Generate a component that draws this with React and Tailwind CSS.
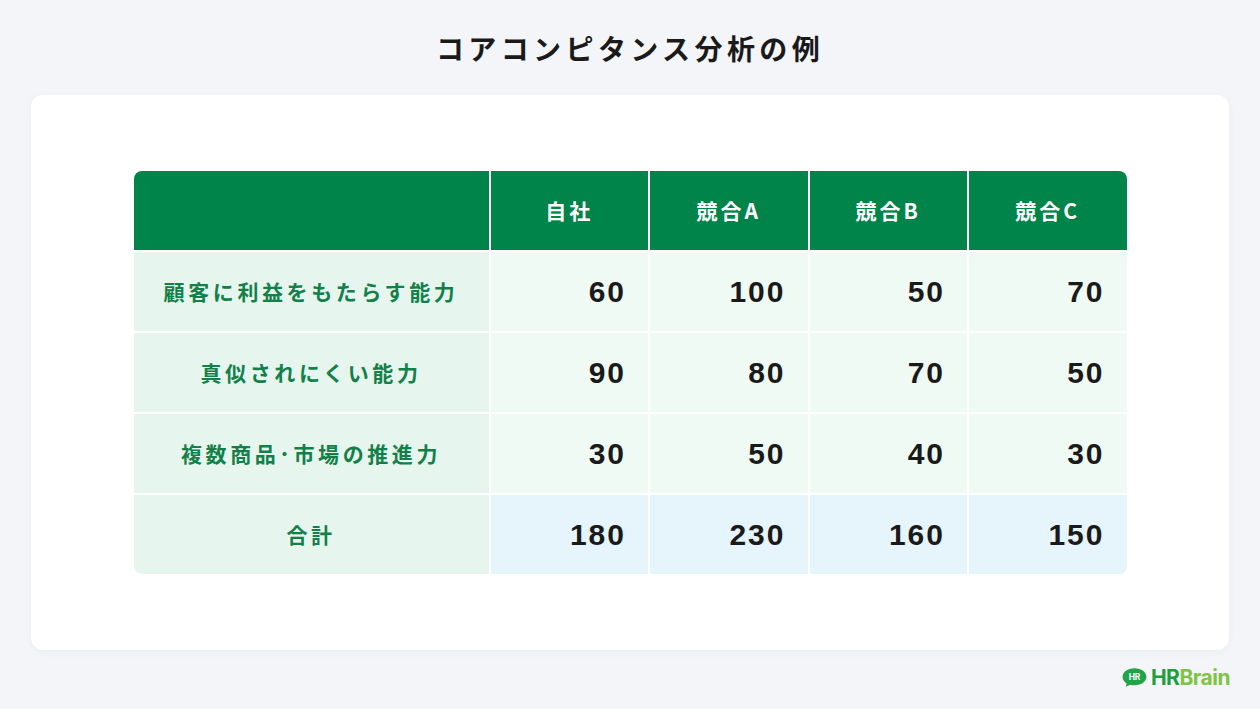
const header = ['自社', '競合A', '競合B', '競合C']

const rows = [
    { label: '顧客に利益をもたらす能力', values: [60, 100, 50, 70] },
    { label: '真似されにくい能力', values: [90, 80, 70, 50] },
    { label: '複数商品･市場の推進力', values: [30, 50, 40, 30] },
]

const total = { label: '合計', values: [180, 230, 160, 150] }

const jp = { fontFamily: '"Noto Sans CJK JP", "Noto Sans", sans-serif' }
const num = { fontFamily: '"Liberation Sans", Arial, sans-serif' }

const Logo = () => (
    <div className="flex items-center gap-[3px]">
        <svg width="27" height="21" viewBox="0 0 26 20">
            <path d="M13 1C6.4 1 1.5 4.6 1.5 9.3c0 2.6 1.5 4.9 3.9 6.4L4.6 19l4.3-2.1c1.3.4 2.7.6 4.1.6 6.6 0 11.5-3.6 11.5-8.2S19.6 1 13 1z" fill="#21a348"/>
            <text x="13" y="12.4" textAnchor="middle" fontSize="8" fontWeight="700" fill="#fff" fontFamily="Inter, sans-serif">HR</text>
        </svg>
        <div className="text-[21px] font-bold leading-none tracking-[-0.5px]" style={{ fontFamily: 'Inter, sans-serif' }}>
            <span className="text-[#1e9e3e]">HR</span>
            <span className="text-[#80c342]">Brain</span>
        </div>
    </div>
)

const App = () => {
    return <div className="h-[709px] w-full bg-[#f4f5f9] flex flex-col overflow-hidden" style={jp}>
        <h1 className="text-center text-[28px] font-bold text-[#1a1a1a] tracking-[4.4px] leading-none pt-[34px] pb-[33px]">
            コアコンピタンス分析の例
        </h1>
        <div className="mx-[31px] h-[555px] bg-white rounded-[12px] shadow-[0_2px_8px_rgba(0,0,0,0.04)] flex items-center justify-center">
            <div className="w-[993px] grid grid-cols-[355px_repeat(4,1fr)] gap-[2px] rounded-[8px] overflow-hidden">
                <div className="h-[79px] bg-[#00844a]"></div>
                {header.map(h => (
                    <div key={h} className="h-[79px] bg-[#00844a] flex items-center justify-center text-white text-[21px] font-bold tracking-[3px]">
                        {h}
                    </div>
                ))}
                {rows.map(r => (
                    <>
                        <div key={r.label} className="h-[79px] bg-[#e6f6ee] flex items-center justify-center text-[#13804a] text-[21px] font-bold tracking-[3.6px]">
                            {r.label}
                        </div>
                        {r.values.map((v, i) => (
                            <div key={r.label + i} className="h-[79px] bg-[#f0faf5] flex items-center justify-end pr-[22px] text-[30px] font-bold text-[#1a1a1a] tracking-[2px]" style={num}>
                                {v}
                            </div>
                        ))}
                    </>
                ))}
                <div className="h-[79px] bg-[#e6f6ee] flex items-center justify-center text-[#13804a] text-[21px] font-bold tracking-[3.6px]">
                    {total.label}
                </div>
                {total.values.map((v, i) => (
                    <div key={'t' + i} className="h-[79px] bg-[#e6f4fc] flex items-center justify-end pr-[22px] text-[30px] font-bold text-[#1a1a1a] tracking-[2px]" style={num}>
                        {v}
                    </div>
                ))}
            </div>
        </div>
        <div className="flex justify-end pr-[30px] pt-[17px]">
            <Logo />
        </div>
    </div>
}

export default App
